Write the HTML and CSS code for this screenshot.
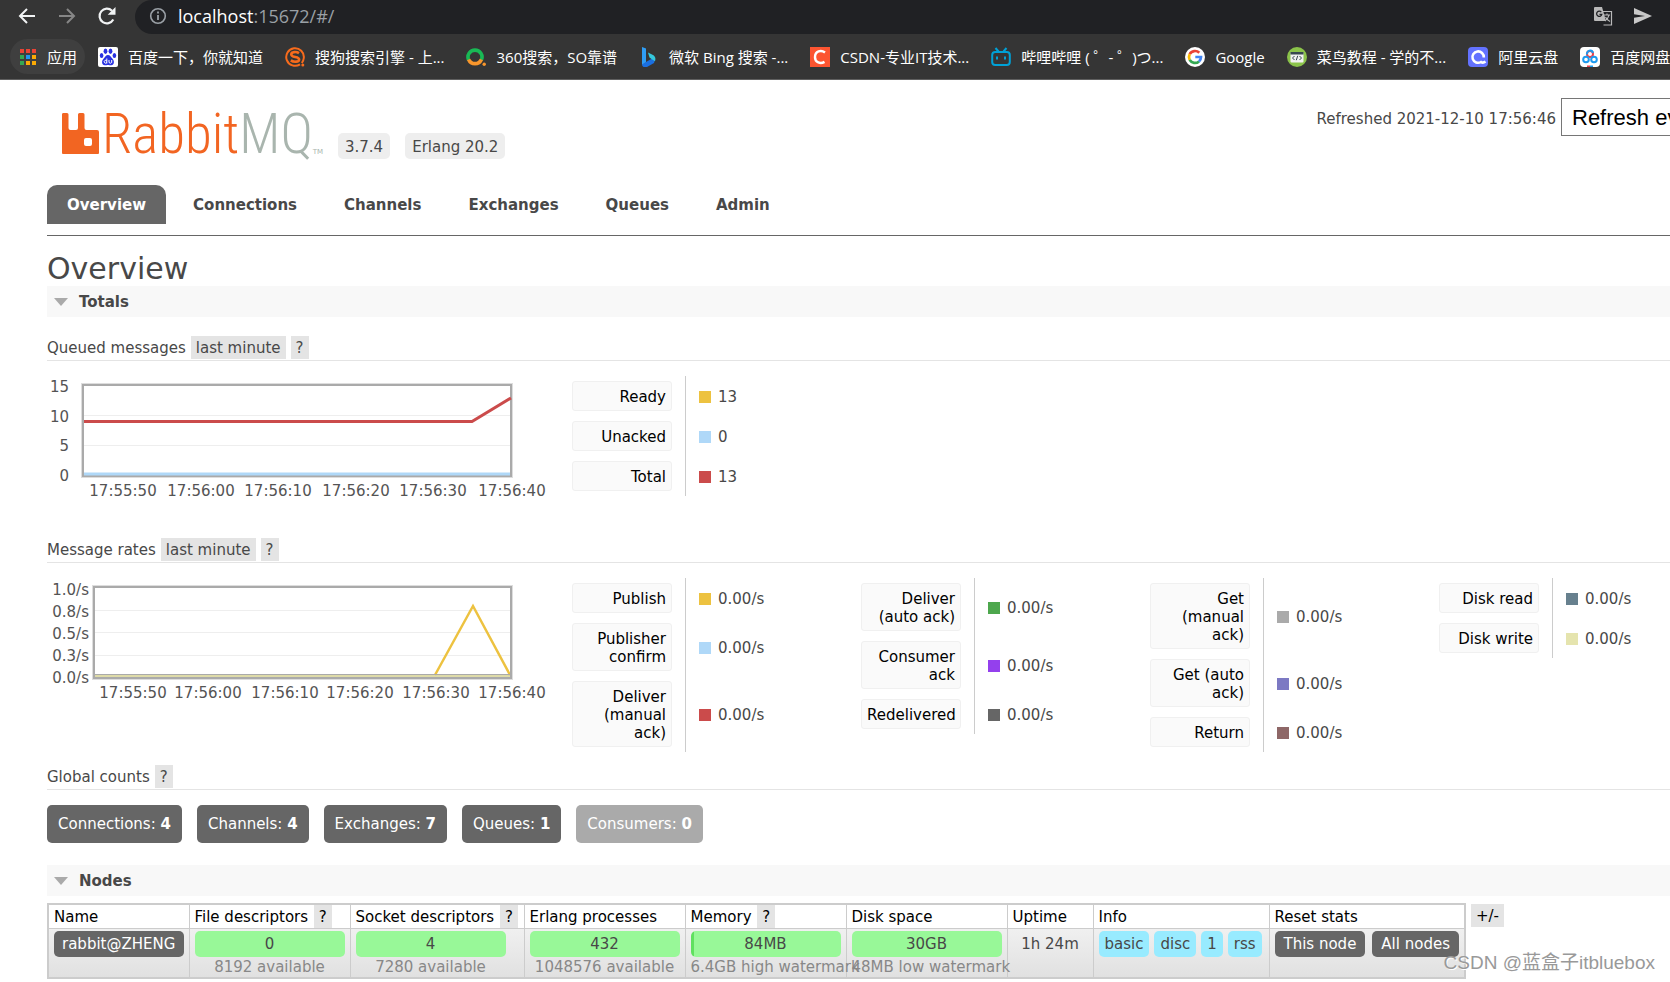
FILE: index.html
```
<!DOCTYPE html>
<html lang="zh-CN">
<head>
<meta charset="utf-8">
<title>RabbitMQ Management</title>
<link rel="stylesheet" href="styles.css">
</head>
<body>
<div class="browser">
  <div class="toolbar">
    <div class="nav-buttons">
      <button class="tool" aria-label="Back"><svg width="20" height="20" viewBox="0 0 20 20" fill="none" stroke="#f1f3f4" stroke-width="2"><path d="M18 10H3M10 3L3 10l7 7"/></svg></button>
      <button class="tool" aria-label="Forward"><svg width="20" height="20" viewBox="0 0 20 20" fill="none" stroke="#868686" stroke-width="2"><path d="M2 10h15M10 3l7 7-7 7"/></svg></button>
      <button class="tool" aria-label="Reload"><svg width="20" height="20" viewBox="0 0 20 20"><path d="M16.300 13.500A7.300 7.300 0 1 1 15 4.800" fill="none" stroke="#f1f3f4" stroke-width="2.200"/><path d="M18.500 1v7.800h-7.800z" fill="#f1f3f4"/></svg></button>
    </div>
    <div class="address">
      <svg width="18" height="18" viewBox="0 0 18 18"><circle cx="9" cy="9" r="7.300" fill="none" stroke="#9aa0a6" stroke-width="1.600"/><path d="M9 8v5M9 4.600v1.900" stroke="#9aa0a6" stroke-width="1.800"/></svg>
      <span class="url"><b>localhost</b>:15672/#/</span>
      <span class="address-tools">
        <svg width="20" height="20" viewBox="0 0 20 20"><path d="M8 5.500h10.500v13.500h-8" fill="none" stroke="#b9b9b9" stroke-width="1.200"/><path d="M2 1h7l4 14H2a1 1 0 0 1-1-1V2a1 1 0 0 1 1-1z" fill="#b9b9b9"/><path d="M8.300 6.200A2.600 2.600 0 1 0 8.800 8.300H6.500" fill="none" stroke="#202124" stroke-width="1.300"/><path d="M11 9h6M14 7.500V9M16 9c-.5 2.500-2 4.500-4 6M12.500 11c1 2 2.500 3.500 4.500 4.500" fill="none" stroke="#b9b9b9" stroke-width="1.200"/></svg>
        <svg width="20" height="20" viewBox="0 0 20 20"><path d="M1 2l18 8-18 8v-6.200L12 10 1 8.200z" fill="#c8c8c8"/></svg>
      </span>
    </div>
  </div>
  <nav class="bookmarks" aria-label="Bookmarks">
    <a class="bookmark apps" href="#"><svg width="18" height="18" viewBox="0 0 18 18"><path d="M1 1h4v4H1zM7 1h4v4H7zM13 1h4v4h-4z" fill="#ea4335"/><path d="M1 7h4v4H1zM1 13h4v4H1z" fill="#34a853"/><path d="M7 7h4v4H7z" fill="#2196f3"/><path d="M13 7h4v4h-4zM7 13h4v4H7zM13 13h4v4h-4z" fill="#fbaa05"/></svg>应用</a>
    <a class="bookmark" href="#"><svg width="20" height="20" viewBox="0 0 20 20"><rect width="20" height="20" rx="2" fill="#fff"/><g fill="#2932e1"><ellipse cx="7.500" cy="4.300" rx="1.900" ry="2.700"/><ellipse cx="12.500" cy="4.300" rx="1.900" ry="2.700"/><ellipse cx="3.600" cy="8.500" rx="1.800" ry="2.500"/><ellipse cx="16.400" cy="8.500" rx="1.800" ry="2.500"/><path d="M10 8c2 0 3 2.200 4.500 3.700 2.300 2.200 1.800 6.300-1.200 6.600-1.500 0-2-.4-3.300-.4s-1.800.4-3.300.4c-3-.3-3.500-4.400-1.200-6.600C7 10.200 8 8 10 8z"/></g><path d="M8.800 11.500v5M8.800 14a1.400 1.400 0 1 0 0 1.500M11 13v2.500q1.300 1.500 2.700 0V13" fill="none" stroke="#fff"/></svg>百度一下，你就知道</a>
    <a class="bookmark" href="#"><svg width="20" height="20" viewBox="0 0 20 20"><path d="M15 17.300A8.800 8.800 0 1 1 18.800 11c-.2 2-1 3.700-2 5" fill="none" stroke="#f76b1c" stroke-width="2"/><path d="M14 6.200C11.500 4.500 6.300 4.600 6.300 7.400c0 3.400 7.800 1.700 7.800 5 0 2.700-5.500 3-8.300 1" fill="none" stroke="#f76b1c" stroke-width="2.600"/><circle cx="17.800" cy="18" r="1.500" fill="#f76b1c"/></svg>搜狗搜索引擎 - 上...</a>
    <a class="bookmark" href="#"><svg width="20" height="20" viewBox="0 0 20 20" fill="none" stroke-width="3.600"><path d="M2.600 13A7 7 0 1 1 15.400 13" stroke="#19b955"/><path d="M2.600 12.500a7 7 0 0 0 12.800 0" stroke="#f8962c"/><circle cx="18.200" cy="17.300" r="1.700" fill="#f8962c" stroke="none"/></svg>360搜索，SO靠谱</a>
    <a class="bookmark" href="#"><svg width="20" height="20" viewBox="0 0 20 20"><path d="M3 0l4 1.500v14L3 18z" fill="#2f9df4"/><path d="M3 17.500l4-2.500 6-3.500 3 1-1 3.500-7 4c-3 1-5-.5-5-2.500z" fill="#1b6fe0"/><path d="M9 5.500l5.500 2.700q2.800 2 1.500 6L12.500 12l-2-1.500z" fill="#35c8dc"/></svg>微软 Bing 搜索 -...</a>
    <a class="bookmark" href="#"><svg width="20" height="20" viewBox="0 0 20 20"><rect width="20" height="20" fill="#fc5531"/><path d="M15 5.500C11 2.500 5 4 5 10.200c0 5.500 5.500 7 9.500 4.700" fill="none" stroke="#fff" stroke-width="2.400"/></svg>CSDN-专业IT技术...</a>
    <a class="bookmark" href="#"><svg width="20" height="20" viewBox="0 0 20 20" fill="none" stroke="#00a1d6" stroke-width="2"><rect x="1.200" y="5" width="17.600" height="13" rx="3"/><path d="M4.500 1l3 3.500M15.500 1l-3 3.500M6 9.500v3M14 9.500v3"/></svg>哔哩哔哩 ( ゜- ゜)つ...</a>
    <a class="bookmark" href="#"><svg width="20" height="20" viewBox="0 0 20 20" fill="none" stroke-width="2.700"><circle cx="10" cy="10" r="10" fill="#fff"/><path d="M14.300 5.800A6 6 0 0 0 4.700 7.200" stroke="#ea4335"/><path d="M4.700 7.200a6 6 0 0 0 0 5.600" stroke="#fbbc05"/><path d="M4.700 12.800a6 6 0 0 0 9.300 1.600" stroke="#34a853"/><path d="M14 14.400q2-1.800 2-4.400h-5.700" stroke="#4285f4"/></svg>Google</a>
    <a class="bookmark" href="#"><svg width="20" height="20" viewBox="0 0 20 20"><circle cx="10" cy="10" r="10" fill="#8bc34a"/><rect x="3.500" y="5" width="13" height="10.500" rx="1" fill="#f1f1f1"/><path d="M3.500 5h13v2.500h-13z" fill="#37474f"/><path d="M7.500 9L5.500 11l2 2M12.500 9l2 2-2 2M10.700 8.800l-1.400 4.400" fill="none" stroke="#37474f"/></svg>菜鸟教程 - 学的不...</a>
    <a class="bookmark" href="#"><svg width="20" height="20" viewBox="0 0 20 20"><rect width="20" height="20" rx="4" fill="#6372ff"/><path d="M15.800 10.500A5.700 5.700 0 1 0 13 15q2 1.500 4.500-.5" fill="none" stroke="#fff" stroke-width="2.600"/></svg>阿里云盘</a>
    <a class="bookmark" href="#"><svg width="20" height="20" viewBox="0 0 20 20" fill="none" stroke-width="2"><rect width="20" height="20" rx="4" fill="#fff"/><circle cx="10" cy="7" r="3" stroke="#e8414d"/><circle cx="6" cy="12.500" r="2.800" stroke="#1e9bf0"/><circle cx="14" cy="12.500" r="2.800" stroke="#1e9bf0"/><path d="M7 7.500A3 3 0 0 1 13 6" stroke="#1e9bf0"/><path d="M7 19.500h3" stroke="#e8414d"/><path d="M10 19.500h3" stroke="#1e9bf0"/></svg>百度网盘</a>
  </nav>
</div>

<div class="page">
  <header class="masthead">
    <div class="logo">
      <svg width="38" height="42" viewBox="0 0 38 42"><path d="M1 0h4q1.500 0 1.500 1.500V15q0 2 2 2H14q2 0 2-2V1.500Q16 0 17.500 0H21q1.500 0 1.500 1.500V15q0 2 2 2H35q2 0 2 2v21q0 1-1 1H1q-1 0-1-1V1.500Q0 0 1 0zM24 25q-2 0-2 2v4q0 2 2 2h4q2 0 2-2v-4q0-2-2-2z" fill="#f26522" fill-rule="evenodd"/></svg>
      <span class="logo-text">Rabbit<span class="logo-mq">MQ</span></span><span class="logo-tm">TM</span>
    </div>
    <div class="versions"><span class="version">3.7.4</span><span class="version">Erlang 20.2</span></div>
    <div class="status">
      <label for="refresh">Refreshed 2021-12-10 17:56:46</label>
      <select id="refresh"><option>Refresh every 5 seconds</option></select>
    </div>
  </header>
  <nav class="tabs">
    <a class="tab selected" href="#">Overview</a>
    <a class="tab" href="#">Connections</a>
    <a class="tab" href="#">Channels</a>
    <a class="tab" href="#">Exchanges</a>
    <a class="tab" href="#">Queues</a>
    <a class="tab" href="#">Admin</a>
  </nav>
  <main>
    <h1>Overview</h1>
    <h2 class="section"><svg width="14" height="8" viewBox="0 0 14 8"><path d="M0 0h14L7 8z" fill="#aaa"/></svg>Totals</h2>

    <h3 class="sub">Queued messages <button class="soft">last minute</button> <button class="soft">?</button></h3>
    <div class="stats queued">
      <svg class="chart" width="525" height="125" viewBox="0 0 525 125">
        <path d="M36 39.500h429M36 69.500h429" stroke="#eee"/>
        <rect x="34.500" y="7.500" width="431" height="94" fill="none" stroke="#ddd"/>
        <rect x="36" y="9" width="428" height="91" fill="none" stroke="#aaa" stroke-width="2"/>
        <path d="M37 98h426" stroke="#afd8f8" stroke-width="3"/>
        <path d="M37 45.500h388L464 22" fill="none" stroke="#cb4b4b" stroke-width="3"/>
        <g class="y-axis"><text x="22" y="16">15</text><text x="22" y="46">10</text><text x="22" y="75">5</text><text x="22" y="105">0</text></g>
        <g class="x-axis"><text x="76" y="120">17:55:50</text><text x="154" y="120">17:56:00</text><text x="231" y="120">17:56:10</text><text x="309" y="120">17:56:20</text><text x="386" y="120">17:56:30</text><text x="465" y="120">17:56:40</text></g>
      </svg>
      <table class="facts">
        <tr><th><span>Ready</span></th><td><i class="key yellow"></i>13</td></tr>
        <tr><th><span>Unacked</span></th><td><i class="key blue"></i>0</td></tr>
        <tr><th><span>Total</span></th><td><i class="key red"></i>13</td></tr>
      </table>
    </div>

    <h3 class="sub">Message rates <button class="soft">last minute</button> <button class="soft">?</button></h3>
    <div class="stats rates">
      <svg class="chart" width="525" height="125" viewBox="0 0 525 125">
        <path d="M47 32.500h418M47 54.500h418M47 77.500h418" stroke="#eee"/>
        <rect x="45.500" y="7.500" width="420" height="94" fill="none" stroke="#ddd"/>
        <path d="M47 98h417" stroke="#dedba8" stroke-width="3"/>
        <path d="M388 97l38-69 37 69" fill="none" stroke="#edc240" stroke-width="2.500"/>
        <path d="M47 96.500h417" stroke="#aaa"/>
        <rect x="47" y="9" width="417" height="91" fill="none" stroke="#aaa" stroke-width="2"/>
        <g class="y-axis"><text x="42" y="17">1.0/s</text><text x="42" y="39">0.8/s</text><text x="42" y="61">0.5/s</text><text x="42" y="83">0.3/s</text><text x="42" y="105">0.0/s</text></g>
        <g class="x-axis"><text x="86" y="120">17:55:50</text><text x="161" y="120">17:56:00</text><text x="238" y="120">17:56:10</text><text x="313" y="120">17:56:20</text><text x="389" y="120">17:56:30</text><text x="465" y="120">17:56:40</text></g>
      </svg>
      <table class="facts">
        <tr><th><span>Publish</span></th><td><i class="key yellow"></i>0.00/s</td></tr>
        <tr><th><span>Publisher confirm</span></th><td><i class="key blue"></i>0.00/s</td></tr>
        <tr><th><span>Deliver (manual ack)</span></th><td><i class="key red"></i>0.00/s</td></tr>
      </table>
      <table class="facts">
        <tr><th><span>Deliver (auto ack)</span></th><td><i class="key green"></i>0.00/s</td></tr>
        <tr><th><span>Consumer ack</span></th><td><i class="key purple"></i>0.00/s</td></tr>
        <tr><th><span>Redelivered</span></th><td><i class="key dark"></i>0.00/s</td></tr>
      </table>
      <table class="facts">
        <tr><th><span>Get (manual ack)</span></th><td><i class="key gray"></i>0.00/s</td></tr>
        <tr><th><span>Get (auto ack)</span></th><td><i class="key violet"></i>0.00/s</td></tr>
        <tr><th><span>Return</span></th><td><i class="key brown"></i>0.00/s</td></tr>
      </table>
      <table class="facts">
        <tr><th><span>Disk read</span></th><td><i class="key slate"></i>0.00/s</td></tr>
        <tr><th><span>Disk write</span></th><td><i class="key khaki"></i>0.00/s</td></tr>
      </table>
    </div>

    <h3 class="sub">Global counts <button class="soft">?</button></h3>
    <div class="counts">
      <a class="count" href="#">Connections: <b>4</b></a>
      <a class="count" href="#">Channels: <b>4</b></a>
      <a class="count" href="#">Exchanges: <b>7</b></a>
      <a class="count" href="#">Queues: <b>1</b></a>
      <a class="count none" href="#">Consumers: <b>0</b></a>
    </div>

    <h2 class="section"><svg width="14" height="8" viewBox="0 0 14 8"><path d="M0 0h14L7 8z" fill="#aaa"/></svg>Nodes</h2>
    <div class="nodes-row">
      <table class="nodes">
        <colgroup><col class="c-name"><col class="c-bar"><col class="c-wide"><col class="c-bar"><col class="c-bar"><col class="c-bar"><col class="c-up"><col class="c-info"><col class="c-reset"></colgroup>
        <thead>
          <tr><th>Name</th><th>File descriptors <button class="soft">?</button></th><th>Socket descriptors <button class="soft">?</button></th><th>Erlang processes</th><th>Memory <button class="soft">?</button></th><th>Disk space</th><th>Uptime</th><th>Info</th><th>Reset stats</th></tr>
        </thead>
        <tbody>
          <tr>
            <td><a class="pill" href="#">rabbit@ZHENG</a></td>
            <td><div class="bar">0</div><div class="limit">8192 available</div></td>
            <td><div class="bar">4</div><div class="limit">7280 available</div></td>
            <td><div class="bar">432</div><div class="limit">1048576 available</div></td>
            <td><div class="bar used">84MB</div><div class="limit">6.4GB high watermark</div></td>
            <td><div class="bar">30GB</div><div class="limit">48MB low watermark</div></td>
            <td class="uptime">1h 24m</td>
            <td><div class="group"><span class="info">basic</span><span class="info">disc</span><span class="info">1</span><span class="info">rss</span></div></td>
            <td><div class="group reset"><button class="pill">This node</button><button class="pill">All nodes</button></div></td>
          </tr>
        </tbody>
      </table>
      <button class="soft columns">+/-</button>
    </div>
  </main>
</div>
<div class="watermark">CSDN @蓝盒子itbluebox</div>
</body>
</html>
```
FILE: styles.css
```
* { box-sizing: border-box; }
html { height: 100%; }
body {
  margin: 0;
  min-height: 100%;
  position: relative;
  overflow: hidden;
  background: #fff;
  color: #484848;
  font: 15px/18px "DejaVu Sans", Verdana, "Noto Sans CJK SC", sans-serif;
}
a { color: inherit; text-decoration: none; }
button { font: inherit; color: inherit; border: 0; padding: 0; background: none; }
svg { display: block; flex: none; }

/* Browser chrome */
.browser {
  background: #353535;
  border-bottom: 1px solid #5f5f5f;
  color: #fff;
  font-family: "Open Sans", "Noto Sans CJK SC", sans-serif;
}
.toolbar { display: flex; height: 34px; }
.nav-buttons { display: flex; align-items: center; gap: 20px; width: 135px; padding: 0 0 2px 17px; }
.address {
  flex: 1;
  display: flex;
  align-items: center;
  padding: 0 17px 2px 14px;
  background: #202124;
  border-radius: 17px 0 0 17px;
}
.url { margin-left: 11px; font-size: 18px; line-height: 24px; color: #9aa0a6; }
.url b { font-weight: 400; color: #fff; }
.address-tools { display: flex; gap: 20px; margin-left: auto; }
.bookmarks { display: flex; align-items: center; gap: 22px; height: 45px; padding-left: 10px; overflow: hidden; }
.bookmark { display: flex; flex: none; align-items: center; gap: 10px; height: 35px; white-space: nowrap; }
.bookmark.apps { padding: 0 8px 0 9px; margin-right: -9px; border-radius: 18px; background: #3f3f3f; }

/* Masthead */
.page { padding-left: 47px; }
.masthead { display: flex; height: 104px; overflow: hidden; }
.logo { display: flex; align-items: flex-start; width: 291px; padding: 33px 0 0 15px; color: #f26522; }
.logo-text { margin-left: 2px; font: 300 55px/42px "Roboto Condensed", "Liberation Sans Narrow", Roboto, sans-serif; }
.logo-mq { color: #a9b5ae; }
.logo-tm { align-self: flex-end; margin-bottom: 28px; color: #a9b5ae; font-size: 7px; line-height: 8px; }
.versions { display: flex; align-items: flex-start; gap: 15px; padding-top: 53px; }
.version { padding: 5px 7px 3px; border-radius: 5px; background: #eee; }
.status { display: flex; align-items: center; gap: 5px; height: 38px; margin: 18px -171px 0 auto; }
.status label { padding-top: 3px; }
.status select {
  width: 280px;
  height: 38px;
  padding-left: 6px;
  border: 1px solid #767676;
  border-radius: 0;
  background: #fff;
  color: #000;
  font: 22px "Liberation Sans", Arial, sans-serif;
}
.tabs { display: flex; gap: 7px; padding: 1px 0 11px; border-bottom: 1px solid #666; font-weight: 700; }
.tab { padding: 11px 20px 10px; border-radius: 10px 10px 0 0; }
.tab.selected { background: #666; color: #fff; }

/* Sections */
h1 { margin: 16px 0 0; font-size: 30px; line-height: 34px; font-weight: 400; }
.section { display: flex; align-items: center; gap: 11px; height: 31px; margin: 0; padding-left: 7px; background: #f8f8f8; font-size: 15px; }
.sub { display: flex; align-items: center; gap: 5px; margin: 0; padding-bottom: 1px; border-bottom: 1px solid #e4e4e4; font-size: 15px; font-weight: 400; }
.section + .sub { margin-top: 19px; }
.soft { padding: 3px 5px 2px; background: #e4e4e4; white-space: nowrap; }

/* Charts and legends */
.stats { display: flex; align-items: flex-start; padding-top: 15px; }
.queued { min-height: 177px; }
.rates { min-height: 202px; }
.chart text { font-size: 15px; fill: #545454; }
.y-axis { text-anchor: end; }
.x-axis { text-anchor: middle; }
.facts { flex: none; width: 289px; border-spacing: 0; }
.facts th { width: 113px; padding: 5px 13px 5px 0; color: #000; font-weight: 400; text-align: right; }
.facts th span { display: block; width: 100px; padding: 6px 5px 4px; border: 1px solid #f0f0f0; border-radius: 3px; background: #fafafa; }
.facts td { padding: 2px 0 0 13px; border-left: 1px solid #ccc; }
.key { display: inline-block; width: 12px; height: 12px; margin-right: 7px; vertical-align: -1px; }
.yellow { background: #edc240; }
.blue { background: #afd8f8; }
.red { background: #cb4b4b; }
.green { background: #4da74d; }
.purple { background: #9440ed; }
.dark { background: #666; }
.gray { background: #aaa; }
.violet { background: #7c79c3; }
.brown { background: #8e6767; }
.slate { background: #67808e; }
.khaki { background: #e5e4ae; }

/* Global counts */
.counts { display: flex; gap: 15px; padding: 15px 0 22px; }
.count { padding: 10px 11px; border-radius: 5px; background: #666; color: #fff; }
.count.none { background: #aaa; }

/* Nodes */
.nodes-row { display: flex; align-items: flex-start; gap: 5px; padding-top: 7px; }
.nodes { table-layout: fixed; width: 1418px; border-collapse: collapse; border: 2px solid #ccc; }
.nodes th, .nodes td { border: 1px solid #ccc; text-align: left; vertical-align: top; font-weight: 400; white-space: nowrap; }
.nodes th { height: 24px; padding: 0 5px; vertical-align: middle; color: #000; }
.nodes th .soft { margin-left: 1px; }
.nodes td { height: 48px; padding: 2px 5px 0; }
.nodes tbody tr { background: linear-gradient(#f0f0f0, #e0e0e0); }
.c-name { width: 141px; }
.c-bar { width: 161px; }
.c-wide { width: 174px; }
.c-up { width: 86px; }
.c-info { width: 176px; }
.c-reset { width: 196px; }
.bar { width: 150px; padding: 4px 0; border-radius: 5px; background: #98f898; text-align: center; }
.bar.used { background: linear-gradient(to right, #60e060 3px, #98f898 3px); }
.limit { display: flex; justify-content: safe center; width: 150px; line-height: 20px; color: #888; }
.pill, .info { display: block; padding: 4px 8px; border-radius: 5px; background: #666; color: #fff; white-space: nowrap; }
.group { display: flex; gap: 5px; }
.group.reset { gap: 7px; }
.reset .pill { padding: 4px 9px; }
.info { padding: 4px 6px; background: #98ebff; color: #484848; }
.nodes .uptime { padding-top: 6px; text-align: center; }
.columns { margin-top: 1px; color: #000; }
.watermark {
  position: absolute;
  right: 15px;
  bottom: 5px;
  color: #999;
  text-shadow: 1px 1px 0 #fff;
  font: 19px/28px "Liberation Sans", "Noto Sans CJK SC", sans-serif;
}
```
